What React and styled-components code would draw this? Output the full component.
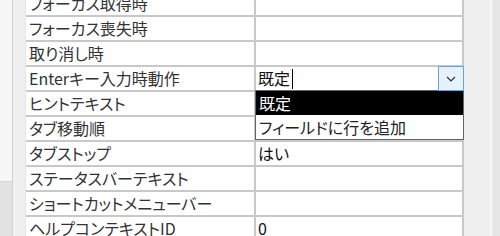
import React from "react";
import styled, { createGlobalStyle } from "styled-components";

const Global = createGlobalStyle`
  html, body { margin: 0; padding: 0; width: 500px; height: 236px; overflow: hidden; background: #fff; }
  body { font-family: "Noto Sans CJK JP", "Noto Sans", sans-serif; }
`;

const Page = styled.div`
  display: flex;
  width: 500px;
  height: 236px;
  overflow: hidden;
`;

const NavStrip = styled.div`
  width: 12px;
  display: flex;
  flex-direction: column;
  border-right: 1px solid #d2d2d2;
`;

const NavUpper = styled.div`
  height: 181px;
  background: #f7f7f7;
  border-bottom: 1px solid #d6d6d6;
`;

const NavLower = styled.div`
  flex: 1;
  background: #e2e2e2;
`;

const Gutter = styled.div`
  width: 12px;
  background: #f0f0f0;
  border-right: 1px solid #e4e4e4;
`;

const Sheet = styled.div`
  position: relative;
  width: 438px;
  display: flex;
  flex-direction: column;
  margin-top: -8px;
`;

const Row = styled.div`
  display: grid;
  grid-template-columns: 230px 1fr;
  height: 23px;
  border-bottom: 2px solid #c8c8c8;
  flex-shrink: 0;
`;

const Label = styled.div`
  padding-left: 3px;
  font-size: 16px;
  line-height: 23px;
  color: #333;
  white-space: nowrap;
  font-feature-settings: "palt";
  border-right: 2px solid #c8c8c8;
`;

const Value = styled.div`
  position: relative;
  padding-left: 2px;
  font-size: 16px;
  line-height: 23px;
  color: #111;
  white-space: nowrap;
  font-feature-settings: "palt";
  border-right: 2px solid #c8c8c8;
`;

const Caret = styled.span`
  display: inline-block;
  width: 1px;
  height: 20px;
  background: #000;
  vertical-align: -4px;
  margin-left: 2px;
`;

const DropButton = styled.div`
  position: absolute;
  right: -2px;
  top: -1px;
  width: 24px;
  height: 23px;
  background: #e5f1fb;
  border: 1px solid #73a2d0;
  display: flex;
  align-items: center;
  justify-content: center;
  z-index: 3;
`;

const List = styled.div`
  position: absolute;
  left: -1px;
  right: -2px;
  top: 23px;
  background: #fff;
  border: 1px solid #646464;
  z-index: 2;
  display: flex;
  flex-direction: column;
`;

const Item = styled.div`
  height: 24px;
  line-height: 24px;
  padding-left: 3px;
  font-size: 16px;
  font-feature-settings: "palt";
  background: ${(p) => (p.$selected ? "#000" : "#fff")};
  color: ${(p) => (p.$selected ? "#fff" : "#222")};
`;

const Scroll = styled.div`
  flex: 1;
  display: flex;
`;

const Track = styled.div`
  width: 27px;
  background: #f0f0f0;
  border-right: 1px solid #fbfbfb;
`;

const Edge = styled.div`
  flex: 1;
  background: #e6e6e6;
`;

const rows = [
  ["フォーカス取得時", ""],
  ["フォーカス喪失時", ""],
  ["取り消し時", ""],
  ["Enterキー入力時動作", "combo"],
  ["ヒントテキスト", ""],
  ["タブ移動順", ""],
  ["タブストップ", "はい"],
  ["ステータスバーテキスト", ""],
  ["ショートカットメニューバー", ""],
  ["ヘルプコンテキストID", "0"],
  ["", ""],
];

export default function App() {
  return (
    <Page>
      <Global />
      <NavStrip>
        <NavUpper />
        <NavLower />
      </NavStrip>
      <Gutter />
      <Sheet>
        {rows.map(([label, value], i) => (
          <Row key={i}>
            <Label>{label}</Label>
            {value === "combo" ? (
              <Value>
                既定
                <Caret />
                <DropButton>
                  <svg width="10" height="6" viewBox="0 0 10 6">
                    <path d="M1 0.8 L5 4.8 L9 0.8" fill="none" stroke="#222" strokeWidth="1.2" />
                  </svg>
                </DropButton>
                <List>
                  <Item $selected>既定</Item>
                  <Item>フィールドに行を追加</Item>
                </List>
              </Value>
            ) : (
              <Value>{value}</Value>
            )}
          </Row>
        ))}
      </Sheet>
      <Scroll>
        <Track />
        <Edge />
      </Scroll>
    </Page>
  );
}
